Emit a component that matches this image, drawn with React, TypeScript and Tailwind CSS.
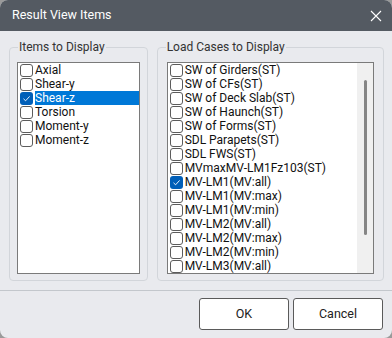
import React from "react";

const items = [
  { label: "Axial", checked: false, selected: false },
  { label: "Shear-y", checked: false, selected: false },
  { label: "Shear-z", checked: true, selected: true },
  { label: "Torsion", checked: false, selected: false },
  { label: "Moment-y", checked: false, selected: false },
  { label: "Moment-z", checked: false, selected: false },
];

const cases = [
  { label: "SW of Girders(ST)", checked: false },
  { label: "SW of CFs(ST)", checked: false },
  { label: "SW of Deck Slab(ST)", checked: false },
  { label: "SW of Haunch(ST)", checked: false },
  { label: "SW of Forms(ST)", checked: false },
  { label: "SDL Parapets(ST)", checked: false },
  { label: "SDL FWS(ST)", checked: false },
  { label: "MVmaxMV-LM1Fz103(ST)", checked: false },
  { label: "MV-LM1(MV:all)", checked: true },
  { label: "MV-LM1(MV:max)", checked: false },
  { label: "MV-LM1(MV:min)", checked: false },
  { label: "MV-LM2(MV:all)", checked: false },
  { label: "MV-LM2(MV:max)", checked: false },
  { label: "MV-LM2(MV:min)", checked: false },
  { label: "MV-LM3(MV:all)", checked: false },
];

function Box({ checked }: { checked: boolean }) {
  if (checked) {
    return (
      <span className="flex h-[13px] w-[13px] shrink-0 items-center justify-center rounded-[3px] bg-[#005fb8]">
        <svg width="9" height="9" viewBox="0 0 9 9">
          <path d="M1.5 4.8 L3.6 6.8 L7.6 2.4" fill="none" stroke="#ffffff" strokeWidth="0.9" />
        </svg>
      </span>
    );
  }
  return <span className="h-[13px] w-[13px] shrink-0 rounded-[3px] border border-[#5c5c5c] bg-white" />;
}

function Row({ label, checked, selected }: { label: string; checked: boolean; selected?: boolean }) {
  return (
    <div className="flex h-[14px] items-center gap-[2px] pl-[2px]">
      <Box checked={checked} />
      <span
        className={
          "flex h-[14px] items-center whitespace-nowrap leading-[14px] " +
          (selected ? "flex-1 bg-[#0078d7] text-white" : "text-[#111]")
        }
      >
        {label}
      </span>
    </div>
  );
}

export default function App() {
  return (
    <div
      className="h-[338px] w-[392px] overflow-hidden bg-[#9a9a9a]"
      style={{ fontFamily: "Roboto, 'Noto Sans', sans-serif" }}
    >
      <div className="flex h-[338px] w-[392px] flex-col overflow-hidden rounded-[8px] bg-[#e9eaee]">
        <div className="flex h-[31px] shrink-0 items-center justify-between bg-[#545a62] pl-[12px] pr-[10px] text-[12.5px] text-white">
          <span>Result View Items</span>
          <svg width="12" height="12" viewBox="0 0 12 12">
            <path d="M1 1 L11 11 M11 1 L1 11" stroke="#ffffff" strokeWidth="1.1" />
          </svg>
        </div>
        <div className="flex gap-[9px] pl-[9px] pr-[8px] pt-[8px]">
          <fieldset className="h-[242px] w-[139px] rounded-[4px] border border-[#d2d5da] px-[7px] pb-[6px]">
            <legend className="ml-[1px] px-[1px] text-[12px] leading-[16px] text-[#333]">Items to Display</legend>
            <div className="mt-[7px] h-[212px] border border-[#7a7a7a] bg-white text-[12px]">
              {items.map((it) => (
                <Row key={it.label} label={it.label} checked={it.checked} selected={it.selected} />
              ))}
            </div>
          </fieldset>
          <fieldset className="h-[242px] w-[228px] rounded-[4px] border border-[#d2d5da] px-[9px] pb-[6px]">
            <legend className="ml-[-1px] px-[1px] text-[12px] leading-[16px] text-[#333]">Load Cases to Display</legend>
            <div className="mt-[7px] flex h-[212px] overflow-hidden border border-[#7a7a7a] bg-white text-[12px]">
              <div className="flex-1 overflow-hidden">
                {cases.map((c) => (
                  <Row key={c.label} label={c.label} checked={c.checked} />
                ))}
              </div>
              <div className="flex w-[16px] shrink-0 justify-center bg-[#f0f0f0] pt-[17px]">
                <div className="h-[155px] w-[3px] rounded-full bg-[#858585]" />
              </div>
            </div>
          </fieldset>
        </div>
        <div className="mt-[9px] h-px bg-[#c3c7cc]" />
        <div className="flex justify-end gap-[4px] pr-[9px] pt-[7px]">
          <button className="h-[32px] w-[90px] rounded-[3px] border border-[#5a5a5a] bg-white text-[12.5px] text-[#222]">
            OK
          </button>
          <button className="h-[32px] w-[90px] rounded-[3px] border border-[#5a5a5a] bg-white text-[12.5px] text-[#222]">
            Cancel
          </button>
        </div>
      </div>
    </div>
  );
}
